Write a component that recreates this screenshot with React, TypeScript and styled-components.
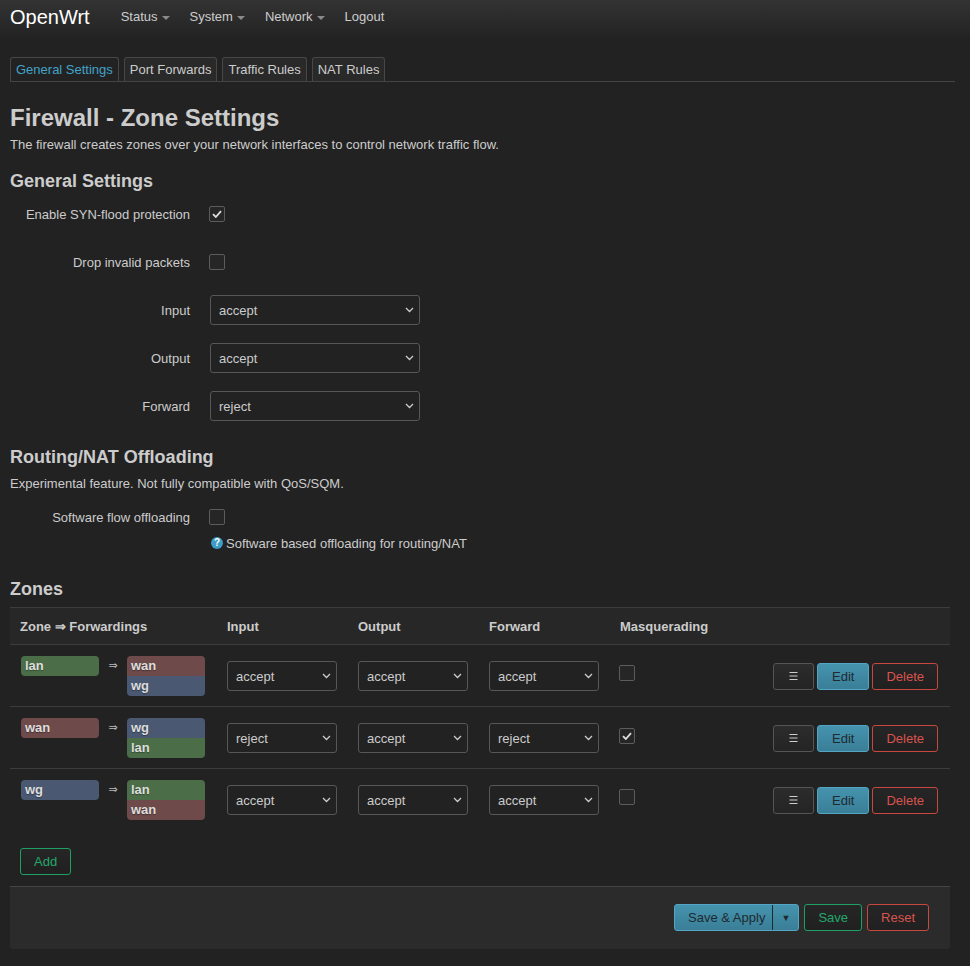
import styled, { createGlobalStyle } from 'styled-components'

const GlobalStyle = createGlobalStyle`
  * {
    box-sizing: border-box;
  }
  body {
    margin: 0;
    background: #222;
    color: #ccc;
    font-family: "Liberation Sans", Arial, sans-serif;
    font-size: 13px;
  }
`

const Header = styled.header`
  height: 40px;
  display: flex;
  align-items: flex-start;
  padding: 5px 10px 0;
  background: linear-gradient(#333, #222);
`

const Brand = styled.a`
  font-size: 20px;
  line-height: 24px;
  color: #fff;
  margin-right: 21px;
`

const Menu = styled.ul`
  display: flex;
  margin: 0;
  padding: 0;
  list-style: none;
`

const MenuItem = styled.li`
  display: flex;
  align-items: center;
  padding: 0 10px;
  line-height: 24px;
  color: #ccc;
`

const Caret = styled.span`
  display: inline-block;
  margin-left: 4px;
  margin-top: 1px;
  border-top: 4px solid #8a8a8a;
  border-left: 4px solid transparent;
  border-right: 4px solid transparent;
`

const Main = styled.main`
  padding: 0 20px 0 10px;
`

const Tabs = styled.ul`
  display: flex;
  gap: 5px;
  margin: 17px -5px 0 0;
  padding: 0;
  list-style: none;
  border-bottom: 1px solid #444;
`

const Tab = styled.li<{ $active?: boolean }>`
  height: 24px;
  line-height: 23px;
  padding: 0 5px;
  border: 1px solid #474747;
  border-bottom: none;
  border-radius: 3px 3px 0 0;
  background: ${(p) => (p.$active ? '#222' : '#292929')};
  color: ${(p) => (p.$active ? '#42a3c9' : '#ccc')};
`

const Title = styled.h2`
  margin: 22px 0 4px;
  font-size: 24px;
  line-height: 28px;
  font-weight: bold;
  color: #ccc;
`

const Description = styled.p<{ $top?: number }>`
  margin: ${(p) => p.$top ?? 0}px 0 0;
  line-height: 18px;
`

const SectionTitle = styled.h3<{ $top: number }>`
  margin: ${(p) => p.$top}px 0 0;
  font-size: 18px;
  line-height: 22px;
  font-weight: bold;
  color: #ccc;
`

const Fields = styled.div<{ $top: number }>`
  display: flex;
  flex-direction: column;
  gap: 16px;
  margin-top: ${(p) => p.$top}px;
`

const FieldRow = styled.div`
  display: grid;
  grid-template-columns: 180px 1fr;
  column-gap: 20px;
  align-items: center;
  height: 32px;
`

const FieldLabel = styled.label`
  text-align: right;
`

const HelpText = styled.div`
  display: flex;
  align-items: center;
  gap: 3px;
  margin: 2px 0 0 201px;
  line-height: 18px;
`

const HelpIcon = styled.span`
  width: 12px;
  height: 12px;
  border-radius: 50%;
  background: #3c9dc6;
  color: #fff;
  font-size: 10px;
  font-weight: bold;
  line-height: 12px;
  text-align: center;
  margin-top: -2px;
`

const Box = styled.span<{ $shift?: number }>`
  display: inline-flex;
  align-items: center;
  justify-content: center;
  width: 16px;
  height: 16px;
  margin-left: -1px;
  border: 1px solid #5c5c5c;
  border-radius: 2px;
  background: #262626;
  margin-bottom: ${(p) => p.$shift ?? 0}px;
`

const SelectWrap = styled.span<{ $width: number }>`
  position: relative;
  display: inline-block;
  width: ${(p) => p.$width}px;
  height: 30px;
  vertical-align: middle;
`

const NativeSelect = styled.select`
  appearance: none;
  width: 100%;
  height: 100%;
  padding: 0 22px 0 8px;
  border: 1px solid #575757;
  border-radius: 3px;
  background: #222;
  color: #ccc;
  font-family: inherit;
  font-size: 13px;
`

const Chevron = styled.svg`
  position: absolute;
  right: 6px;
  top: 12px;
  pointer-events: none;
`

const ZoneSection = styled.div`
  margin-top: 7px;
`

const ZoneTable = styled.table`
  width: 100%;
  table-layout: fixed;
  border-collapse: separate;
  border-spacing: 0;
  border-top: 1px solid #3c3c3c;
`

const HeadCell = styled.th`
  height: 37px;
  padding: 0 10px;
  text-align: left;
  font-weight: bold;
  background: #272727;
  border-bottom: 1px solid #3c3c3c;
`

const Row = styled.tr`
  &:not(:last-child) td {
    border-bottom: 1px solid #3c3c3c;
  }
`

const Cell = styled.td<{ $right?: boolean }>`
  padding: 11px ${(p) => (p.$right ? 12 : 10)}px 10px 10px;
  vertical-align: middle;
  text-align: ${(p) => (p.$right ? 'right' : 'left')};
`

const ZoneFlow = styled.div`
  display: flex;
  align-items: flex-start;
  margin-left: 1px;
`

const Badge = styled.span<{ $color: string; $radius: string }>`
  display: block;
  width: 78px;
  height: 20px;
  padding-left: 4px;
  line-height: 20px;
  font-weight: bold;
  color: #ddd;
  text-shadow: 0 1px 1px rgba(0, 0, 0, 0.35);
  background: ${(p) => p.$color};
  border-radius: ${(p) => p.$radius};
`

const Arrow = styled.span`
  width: 28px;
  line-height: 20px;
  text-align: center;
  color: #bbb;
  font-family: "DejaVu Sans", sans-serif;
  font-size: 11px;
`

const Stack = styled.div`
  display: flex;
  flex-direction: column;
`

const Actions = styled.div`
  display: inline-flex;
  gap: 3px;
`

type Variant = 'neutral' | 'primary' | 'positive' | 'negative'

const variants: Record<Variant, string> = {
  neutral: 'background: linear-gradient(#2c2c2c, #242424); border-color: #555; color: #ccc;',
  primary: 'background: linear-gradient(#4593ae, #3a7e97); border-color: #52a5c3; color: #1e2a30;',
  positive: 'background: linear-gradient(#262626, #202020); border-color: #1e9f63; color: #23a86b;',
  negative: 'background: linear-gradient(#262626, #202020); border-color: #c8483f; color: #d9534f;',
}

const Button = styled.button<{ $variant: Variant; $pad?: number }>`
  height: 27px;
  padding: 0 ${(p) => p.$pad ?? 13}px;
  border: 1px solid;
  border-radius: 3px;
  font-family: inherit;
  font-size: 13px;
  line-height: 25px;
  display: inline-flex;
  align-items: center;
  ${(p) => variants[p.$variant]}
`

const AddBar = styled.div`
  padding: 18px 10px 0;
`

const Footer = styled.div`
  display: flex;
  justify-content: flex-end;
  gap: 5px;
  margin-top: 11px;
  padding: 17px 21px 18px;
  background: #2b2b2b;
  border-top: 1px solid #454545;
  border-radius: 0 0 3px 3px;
`

const SplitButton = styled.div`
  display: flex;
  height: 27px;
  border: 1px solid #52a5c3;
  border-radius: 3px;
  background: linear-gradient(#4593ae, #3a7e97);
  color: #1e2a30;
`

const SplitMain = styled.span`
  padding: 0 7px 0 13px;
  line-height: 25px;
  border-right: 1px solid #1d2a30;
`

const SplitToggle = styled.span`
  width: 25px;
  display: flex;
  align-items: center;
  justify-content: center;
  font-size: 9px;
`

const zoneColors: Record<string, string> = {
  lan: '#4b6e49',
  wan: '#6e4a4a',
  wg: '#4a5872',
}

const zones = [
  { name: 'lan', to: ['wan', 'wg'], input: 'accept', output: 'accept', forward: 'accept', masq: false },
  { name: 'wan', to: ['wg', 'lan'], input: 'reject', output: 'accept', forward: 'reject', masq: true },
  { name: 'wg', to: ['lan', 'wan'], input: 'accept', output: 'accept', forward: 'accept', masq: false },
]

function Checkbox({ checked, shift }: { checked?: boolean; shift?: number }) {
  return (
    <Box $shift={shift}>
      {checked && (
        <svg width="10" height="8" viewBox="0 0 10 8">
          <path d="M1 4.2 L3.8 7 L9 1.2" fill="none" stroke="#ddd" strokeWidth="1.8" />
        </svg>
      )}
    </Box>
  )
}

function Select({ value, width }: { value: string; width: number }) {
  return (
    <SelectWrap $width={width}>
      <NativeSelect defaultValue={value}>
        <option value="reject">reject</option>
        <option value="drop">drop</option>
        <option value="accept">accept</option>
      </NativeSelect>
      <Chevron width="9" height="6" viewBox="0 0 9 6">
        <path d="M1 1 L4.5 4.5 L8 1" fill="none" stroke="#ccc" strokeWidth="1.3" />
      </Chevron>
    </SelectWrap>
  )
}

function stackRadius(index: number, count: number) {
  if (count === 1) return '4px'
  if (index === 0) return '4px 4px 0 0'
  if (index === count - 1) return '0 0 4px 4px'
  return '0'
}

export default function App() {
  return (
    <>
      <GlobalStyle />
      <Header>
        <Brand>OpenWrt</Brand>
        <Menu>
          <MenuItem>Status<Caret /></MenuItem>
          <MenuItem>System<Caret /></MenuItem>
          <MenuItem>Network<Caret /></MenuItem>
          <MenuItem>Logout</MenuItem>
        </Menu>
      </Header>
      <Main>
        <Tabs>
          <Tab $active>General Settings</Tab>
          <Tab>Port Forwards</Tab>
          <Tab>Traffic Rules</Tab>
          <Tab>NAT Rules</Tab>
        </Tabs>

        <Title>Firewall - Zone Settings</Title>
        <Description>
          The firewall creates zones over your network interfaces to control network traffic flow.
        </Description>

        <SectionTitle $top={16}>General Settings</SectionTitle>
        <Fields $top={6}>
          <FieldRow>
            <FieldLabel>Enable SYN-flood protection</FieldLabel>
            <Checkbox checked />
          </FieldRow>
          <FieldRow>
            <FieldLabel>Drop invalid packets</FieldLabel>
            <Checkbox />
          </FieldRow>
          <FieldRow>
            <FieldLabel>Input</FieldLabel>
            <Select value="accept" width={210} />
          </FieldRow>
          <FieldRow>
            <FieldLabel>Output</FieldLabel>
            <Select value="accept" width={210} />
          </FieldRow>
          <FieldRow>
            <FieldLabel>Forward</FieldLabel>
            <Select value="reject" width={210} />
          </FieldRow>
        </Fields>

        <SectionTitle $top={24}>Routing/NAT Offloading</SectionTitle>
        <Description $top={7}>Experimental feature. Not fully compatible with QoS/SQM.</Description>
        <Fields $top={8}>
          <FieldRow>
            <FieldLabel>Software flow offloading</FieldLabel>
            <Checkbox />
          </FieldRow>
        </Fields>
        <HelpText>
          <HelpIcon>?</HelpIcon>
          Software based offloading for routing/NAT
        </HelpText>

        <SectionTitle $top={25}>Zones</SectionTitle>
        <ZoneSection>
          <ZoneTable>
            <colgroup>
              <col style={{ width: 207 }} />
              <col style={{ width: 131 }} />
              <col style={{ width: 131 }} />
              <col style={{ width: 131 }} />
              <col style={{ width: 140 }} />
              <col />
            </colgroup>
            <thead>
              <tr>
                <HeadCell>Zone ⇒ Forwardings</HeadCell>
                <HeadCell>Input</HeadCell>
                <HeadCell>Output</HeadCell>
                <HeadCell>Forward</HeadCell>
                <HeadCell>Masquerading</HeadCell>
                <HeadCell />
              </tr>
            </thead>
            <tbody>
              {zones.map((zone) => (
                <Row key={zone.name}>
                  <Cell>
                    <ZoneFlow>
                      <Badge $color={zoneColors[zone.name]} $radius="4px">
                        {zone.name}
                      </Badge>
                      <Arrow>⇒</Arrow>
                      <Stack>
                        {zone.to.map((dest, i) => (
                          <Badge
                            key={dest}
                            $color={zoneColors[dest]}
                            $radius={stackRadius(i, zone.to.length)}
                          >
                            {dest}
                          </Badge>
                        ))}
                      </Stack>
                    </ZoneFlow>
                  </Cell>
                  <Cell>
                    <Select value={zone.input} width={110} />
                  </Cell>
                  <Cell>
                    <Select value={zone.output} width={110} />
                  </Cell>
                  <Cell>
                    <Select value={zone.forward} width={110} />
                  </Cell>
                  <Cell>
                    <Checkbox checked={zone.masq} shift={4} />
                  </Cell>
                  <Cell $right>
                    <Actions>
                      <Button $variant="neutral" title="Drag to reorder">
                        <svg width="13" height="10" viewBox="0 0 13 10">
                          <path d="M2.5 1.5 H10.5 M2.5 5 H10.5 M2.5 8.5 H10.5" stroke="#ccc" strokeWidth="1" />
                        </svg>
                      </Button>
                      <Button $variant="primary" $pad={14}>Edit</Button>
                      <Button $variant="negative">Delete</Button>
                    </Actions>
                  </Cell>
                </Row>
              ))}
            </tbody>
          </ZoneTable>
          <AddBar>
            <Button $variant="positive">Add</Button>
          </AddBar>
        </ZoneSection>

        <Footer>
          <SplitButton>
            <SplitMain>Save &amp; Apply</SplitMain>
            <SplitToggle>▼</SplitToggle>
          </SplitButton>
          <Button $variant="positive">Save</Button>
          <Button $variant="negative">Reset</Button>
        </Footer>
      </Main>
    </>
  )
}
